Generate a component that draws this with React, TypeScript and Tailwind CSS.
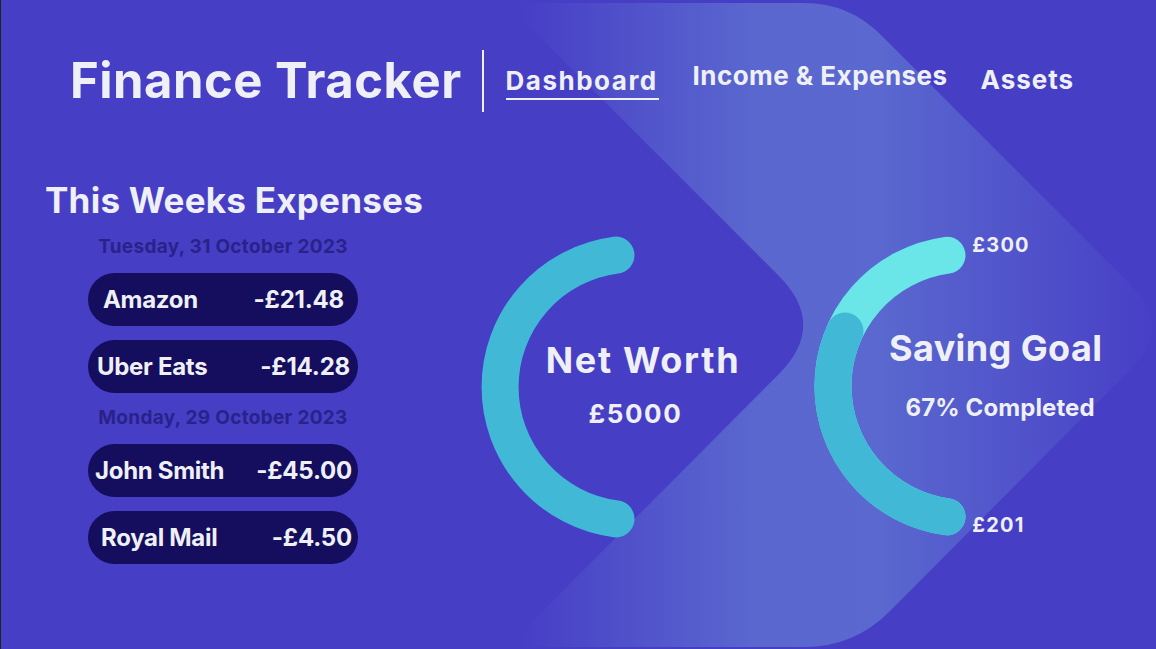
import React from "react";

const font = { fontFamily: "Inter, 'Noto Sans', sans-serif" };

function Chevron() {
  return (
    <svg className="absolute inset-0 pointer-events-none" width="1156" height="649" viewBox="0 0 1156 649">
      <defs>
        <linearGradient id="chev" x1="520" y1="0" x2="1160" y2="0" gradientUnits="userSpaceOnUse">
          <stop offset="0" stopColor="#473EC6" />
          <stop offset="0.36" stopColor="#5A67CF" />
          <stop offset="0.56" stopColor="#5A68CF" />
          <stop offset="1" stopColor="#473EC6" />
        </linearGradient>
      </defs>
      <path
        d="M505 3 L803 3 Q848 3 880 35 L1130 285 Q1172 327 1130 369 L888 612 Q853 647 803 647 L506 647 L777.5 374.5 Q827 325 777.5 275.5 Z"
        fill="url(#chev)"
      />
    </svg>
  );
}

const rows1 = [
  { name: "Amazon", amt: "-£21.48", pl: "pl-[15px]", pr: "pr-[14px]" },
  { name: "Uber Eats", amt: "-£14.28", pl: "pl-[9px]", pr: "pr-[8px]" },
];
const rows2 = [
  { name: "John Smith", amt: "-£45.00", pl: "pl-[7px]", pr: "pr-[6px]" },
  { name: "Royal Mail", amt: "-£4.50", pl: "pl-[13px]", pr: "pr-[6px]" },
];

function Pill({ name, amt, pl, pr }: { name: string; amt: string; pl: string; pr: string }) {
  return (
    <div className={`w-[270px] h-[53px] rounded-full bg-[#150E5E] flex items-center justify-between ${pl} ${pr} text-[24px] font-bold text-[#EEF0F6]`}>
      <span className="tracking-[-0.3px]">{name}</span>
      <span className="tracking-[-0.2px]">{amt}</span>
    </div>
  );
}

export default function App() {
  return (
    <div className="relative w-[1156px] h-[649px] overflow-hidden bg-[#473EC6] border-l border-[#222222]" style={font}>
      <Chevron />
      <div className="relative flex flex-col">
        {/* header */}
        <div className="flex items-center pl-[69px] pt-[50px] h-[112px]">
          <div className="text-[49px] leading-[62px] font-bold text-[#EEF0F6] tracking-[0.5px]">Finance Tracker</div>
          <div className="ml-[20px] w-[2px] h-[62px] bg-[#EEF0F6]" />
          <div className="ml-[22px] flex flex-col items-start mt-[2px]">
            <div className="text-[26px] leading-[32px] font-bold text-[#EEF0F6] tracking-[1.5px]">Dashboard</div>
            <div className="mt-[1px] w-[153px] h-[2px] bg-[#EEF0F6]" />
          </div>
          <div className="ml-[34px] -mt-[10px] text-[26px] leading-[32px] font-bold text-[#EEF0F6] tracking-[0.45px]">Income &amp; Expenses</div>
          <div className="ml-[33px] -mt-[2px] text-[26px] leading-[32px] font-bold text-[#EEF0F6] tracking-[1px]">Assets</div>
        </div>

        {/* main */}
        <div className="flex">
          {/* expenses */}
          <div className="flex flex-col pl-[44px] pt-[66px] w-[436px]">
            <div className="text-[35px] leading-[44px] font-bold text-[#EEF0F6] tracking-[0.25px]">This Weeks Expenses</div>
            <div className="ml-[43px] w-[270px] flex flex-col items-center">
              <div className="mt-[14px] text-[19px] leading-[22px] font-bold text-[#282389] tracking-[0.3px]">Tuesday, 31 October 2023</div>
              <div className="mt-[15px] flex flex-col gap-[14px]">
                {rows1.map((r) => (
                  <Pill key={r.name} {...r} />
                ))}
              </div>
              <div className="mt-[14px] text-[19px] leading-[22px] font-bold text-[#282389] tracking-[0.3px]">Monday, 29 October 2023</div>
              <div className="mt-[15px] flex flex-col gap-[14px]">
                {rows2.map((r) => (
                  <Pill key={r.name} {...r} />
                ))}
              </div>
            </div>
          </div>

          {/* net worth ring */}
          <div className="relative ml-[44px] mt-[121px] w-[310px] h-[308px] flex flex-col items-center pt-[106px]">
            <svg className="absolute inset-0" width="310" height="308" viewBox="0 0 310 308">
              <path d="M135 22.1 A133 133 0 0 0 135 285.9" fill="none" stroke="#41B8D6" strokeWidth="37" strokeLinecap="round" />
            </svg>
            <div className="relative pl-[15px] text-[36px] leading-[42px] font-bold text-[#EEF0F6] tracking-[1.7px]">Net Worth</div>
            <div className="relative mt-[18px] text-[26px] leading-[30px] font-bold text-[#EEF0F6] tracking-[1.6px]">£5000</div>
          </div>

          {/* saving goal ring */}
          <div className="relative ml-[23px] mt-[121px] w-[343px] h-[308px] flex flex-col items-center pt-[94px]">
            <svg className="absolute inset-0" width="343" height="308" viewBox="0 0 343 308">
              <path d="M134 22.23 A132 132 0 0 0 134 283.77" fill="none" stroke="#6BE6E8" strokeWidth="37" strokeLinecap="round" />
              <path d="M32 98.01 A132 132 0 0 0 134 283.77" fill="none" stroke="#41B8D6" strokeWidth="37" strokeLinecap="round" />
            </svg>
            <div className="absolute left-[159px] top-[0px] text-[20px] leading-[24px] font-bold text-[#EEF0F6] tracking-[1.2px]">£300</div>
            <div className="absolute left-[159px] top-[280px] text-[20px] leading-[24px] font-bold text-[#EEF0F6] tracking-[1.2px]">£201</div>
            <div className="relative pl-[22px] text-[36px] leading-[42px] font-bold text-[#EEF0F6] tracking-[0.4px]">Saving Goal</div>
            <div className="relative pl-[31px] mt-[25px] text-[24px] leading-[28px] font-bold text-[#EEF0F6] tracking-[0.1px]">67% Completed</div>
          </div>
        </div>
      </div>
    </div>
  );
}
